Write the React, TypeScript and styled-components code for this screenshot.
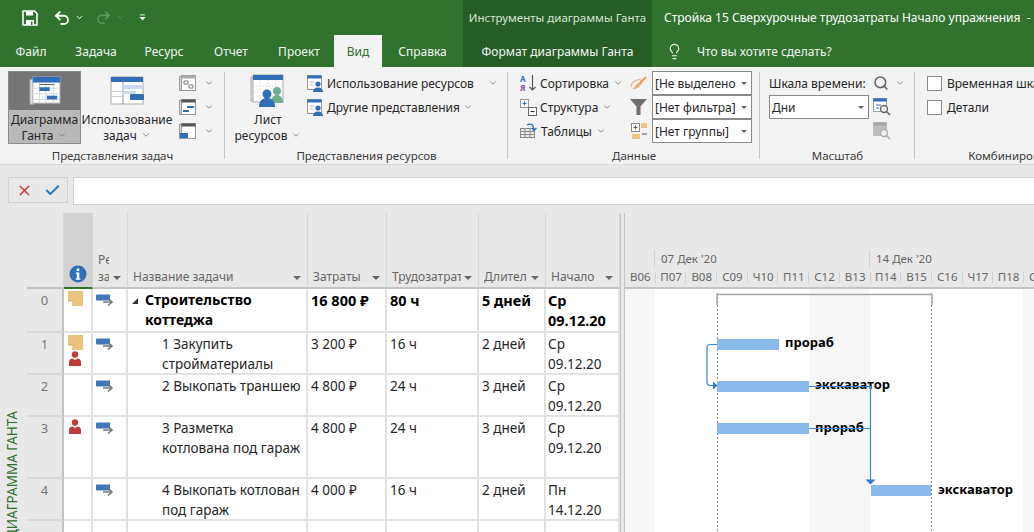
import styled, { createGlobalStyle } from 'styled-components'
import { Undo2, Redo2, Lightbulb, Search, X, Check, ChevronDown } from 'lucide-react'

const GlobalStyle = createGlobalStyle`
  html, body {
    margin: 0;
    padding: 0;
    background: #fff;
  }
  body {
    font-family: "Noto Sans", "Open Sans", "Liberation Sans", sans-serif;
    font-size: 12px;
    color: #262626;
  }
`

const Page = styled.div`
  width: 1034px;
  height: 532px;
  overflow: hidden;
  display: flex;
  flex-direction: column;
`

// title bar + tabs
const TitleBar = styled.div`
  height: 35px;
  flex: none;
  display: flex;
  align-items: center;
  background: #31722e;
  color: #fff;
  padding-left: 22px;
`
const QuickBtn = styled.span<{ $w: number; $dim?: boolean }>`
  width: ${(p) => p.$w}px;
  flex: none;
  display: flex;
  align-items: center;
  color: ${(p) => (p.$dim ? '#5d9a5a' : '#fff')};
`
const ToolsTitle = styled.div`
  width: 189px;
  height: 35px;
  margin-left: 317px;
  flex: none;
  background: #265c25;
  color: #d6e6d5;
  line-height: 35px;
  font-size: 11.5px;
  text-align: center;
  white-space: nowrap;
`
const DocTitle = styled.div`
  margin-left: 12px;
  white-space: pre;
  font-size: 12px;
`
const TabRow = styled.div`
  height: 32px;
  flex: none;
  display: flex;
  background: #31722e;
  color: #f2f6f2;
`
const Tab = styled.div<{ $w: number; $active?: boolean }>`
  width: ${(p) => p.$w}px;
  flex: none;
  text-align: center;
  line-height: 34px;
  font-size: 12px;
  white-space: nowrap;
  background: ${(p) => (p.$active ? '#f3f3f3' : 'transparent')};
  color: ${(p) => (p.$active ? '#2f702c' : 'inherit')};
`
const ToolsTab = styled(Tab)`
  background: #265c25;
`
const Tell = styled.div`
  display: flex;
  align-items: center;
  gap: 14px;
  padding-left: 14px;
  font-size: 12px;
  padding-top: 1px;
`

// ribbon
const Ribbon = styled.div`
  height: 98px;
  box-sizing: border-box;
  flex: none;
  display: flex;
  background: #f3f3f3;
  border-bottom: 1px solid #d8d8d8;
`
const Group = styled.div<{ $w: number }>`
  width: ${(p) => p.$w}px;
  flex: none;
  display: flex;
  flex-direction: column;
  position: relative;
  &::after {
    content: '';
    position: absolute;
    right: 0;
    top: 5px;
    bottom: 5px;
    width: 1px;
    background: #c6c6c6;
  }
`
const GroupBody = styled.div<{ $pl: number }>`
  height: 80px;
  flex: none;
  display: flex;
  padding: 4px 0 0 ${(p) => p.$pl}px;
  box-sizing: border-box;
`
const GroupLabel = styled.div`
  text-align: center;
  font-size: 11.5px;
  line-height: 18px;
  color: #3a3a3a;
  white-space: nowrap;
  overflow: hidden;
`
const BigBtn = styled.div<{ $w: number; $on?: boolean }>`
  width: ${(p) => p.$w}px;
  height: 73px;
  flex: none;
  box-sizing: border-box;
  display: flex;
  flex-direction: column;
  align-items: center;
  font-size: 12px;
  line-height: 16px;
  text-align: center;
  white-space: nowrap;
  border: ${(p) => (p.$on ? '1px solid #8c8c8c' : '1px solid transparent')};
  background: ${(p) => (p.$on ? '#b9b9b9' : 'transparent')};
`
const BigIcon = styled.div<{ $on?: boolean }>`
  align-self: stretch;
  height: 38px;
  flex: none;
  display: flex;
  align-items: center;
  justify-content: center;
  background: ${(p) => (p.$on ? '#757575' : 'transparent')};
`
const BigText = styled.div`
  padding-top: 2px;
`
const Stack = styled.div<{ $w?: number; $ml?: number }>`
  display: flex;
  flex-direction: column;
  flex: none;
  ${(p) => (p.$w ? `width: ${p.$w}px;` : '')}
  ${(p) => (p.$ml ? `margin-left: ${p.$ml}px;` : '')}
`
const SmallBtn = styled.div<{ $gap?: number }>`
  height: 24px;
  display: flex;
  align-items: center;
  gap: ${(p) => p.$gap ?? 3}px;
  white-space: nowrap;
  font-size: 12px;
`
const Caret = styled.span<{ $ml?: number }>`
  display: inline-flex;
  margin-left: ${(p) => p.$ml ?? 0}px;
  color: #777;
`
const Combo = styled.div<{ $w: number }>`
  width: ${(p) => p.$w}px;
  height: 24px;
  box-sizing: border-box;
  background: #fff;
  border: 1px solid #8a8a8a;
  display: flex;
  align-items: center;
  justify-content: space-between;
  padding: 0 4px 0 2px;
  font-size: 12px;
  white-space: nowrap;
  overflow: hidden;
`
const ComboArrow = styled.span`
  width: 0;
  height: 0;
  flex: none;
  border-left: 3px solid transparent;
  border-right: 3px solid transparent;
  border-top: 3px solid #666;
`
const CheckBox = styled.span`
  width: 13px;
  height: 13px;
  flex: none;
  background: #fff;
  border: 1px solid #8a8a8a;
`

// formula bar
const FormulaBar = styled.div`
  height: 48px;
  flex: none;
  display: flex;
  align-items: flex-start;
  gap: 5px;
  padding: 12px 0 0 8px;
  box-sizing: border-box;
  background: #e8e8e8;
`
const FormulaBtns = styled.div`
  width: 60px;
  height: 26px;
  box-sizing: border-box;
  display: flex;
  align-items: center;
  justify-content: center;
  gap: 11px;
  border: 1px solid #d0d0d0;
`
const FormulaInput = styled.div`
  flex: 1;
  height: 26px;
  background: #fff;
  border: 1px solid #d0d0d0;
  border-right: 0;
`

// main area
const Main = styled.div`
  flex: 1;
  display: flex;
  min-height: 0;
  background: #e8e8e8;
`
const SideLabel = styled.div`
  width: 27px;
  flex: none;
  display: flex;
  align-items: flex-end;
  justify-content: flex-start;
`
const SideText = styled.div`
  writing-mode: vertical-rl;
  transform: rotate(180deg);
  color: #2f702c;
  font-size: 13.5px;
  line-height: 25px;
  margin-bottom: -7px;
  white-space: nowrap;
`
const Table = styled.div`
  width: 593px;
  flex: none;
  display: flex;
  flex-direction: column;
`
const columns = '37px 29px 35px 180px 79px 92px 67px 74px'
const HeadRow = styled.div`
  height: 76px;
  flex: none;
  display: grid;
  grid-template-columns: ${columns};
`
const HeadCell = styled.div<{ $sel?: boolean }>`
  display: flex;
  align-items: flex-end;
  justify-content: space-between;
  padding: 0 6px 2px 5px;
  box-sizing: border-box;
  color: #666;
  font-size: 12px;
  line-height: 17px;
  white-space: nowrap;
  overflow: hidden;
  border-right: 1px solid #d6d6d6;
  background: ${(p) => (p.$sel ? '#d2d2d2' : 'transparent')};
  border-bottom: ${(p) => (p.$sel ? '2px solid #2f702c' : '2px solid #c4c4c4')};
`
const InfoHead = styled(HeadCell)`
  justify-content: center;
  padding: 0 0 4px;
`
const ModeLabel = styled.div`
  width: 11px;
  overflow: hidden;
`
const HeadText = styled.span`
  overflow: hidden;
`
const HeadArrow = styled.span`
  flex: none;
  width: 0;
  height: 0;
  margin: 0 0 5px 3px;
  border-left: 4px solid transparent;
  border-right: 4px solid transparent;
  border-top: 4px solid #666;
`
const Row = styled.div<{ $h: number; $bold?: boolean }>`
  height: ${(p) => p.$h}px;
  flex: none;
  display: grid;
  grid-template-columns: ${columns};
  font-size: ${(p) => (p.$bold ? '14.5px' : '13.5px')};
  font-weight: ${(p) => (p.$bold ? 700 : 400)};
  line-height: 20px;
  color: ${(p) => (p.$bold ? '#000' : '#262626')};
`
const Cell = styled.div`
  background: #fff;
  border-right: 2px solid #e2e2e2;
  border-bottom: 2px solid #e2e2e2;
  box-sizing: border-box;
  padding: 1px 0 0 3px;
  overflow: hidden;
  white-space: nowrap;
`
const StartCell = styled(Cell)`
  padding-left: 2px;
`
const NumCell = styled.div`
  border-right: 2px solid #c4c4c4;
  border-bottom: 2px solid #d8d8d8;
  box-sizing: border-box;
  color: #777;
  font-weight: 400;
  font-size: 13px;
  text-align: center;
  padding-top: 1px;
  overflow: hidden;
`
const IconCell = styled(Cell)<{ $pr: number }>`
  display: flex;
  flex-direction: column;
  align-items: center;
  padding: 2px ${(p) => p.$pr}px 0 0;
  gap: 1px;
`
const NameCell = styled(Cell)<{ $indent: number; $bold?: boolean }>`
  padding-left: ${(p) => p.$indent}px;
  position: relative;
  ${(p) => (p.$bold ? 'font-size: 14px;' : '')}
`
const Collapse = styled.span`
  position: absolute;
  left: 4px;
  top: 9px;
  width: 0;
  height: 0;
  border-left: 6px solid transparent;
  border-bottom: 6px solid #333;
`
const Splitter = styled.div`
  width: 5px;
  flex: none;
  border-left: 1px solid #c4c4c4;
  border-right: 1px solid #c4c4c4;
  box-sizing: border-box;
`

// gantt
const Gantt = styled.div`
  flex: 1;
  min-width: 0;
  display: flex;
  flex-direction: column;
  overflow: hidden;
`
const Scale = styled.div`
  height: 76px;
  flex: none;
  border-bottom: 2px solid #c4c4c4;
  box-sizing: border-box;
  display: flex;
  flex-direction: column;
  justify-content: flex-end;
  color: #666;
  font-size: 11.5px;
`
const WeekRow = styled.div`
  display: flex;
  height: 18px;
  padding-left: 29px;
`
const Week = styled.div`
  width: 215px;
  flex: none;
  border-left: 1px solid #d0d0d0;
  padding-left: 6px;
  box-sizing: border-box;
  line-height: 18px;
  white-space: nowrap;
`
const DayRow = styled.div`
  display: flex;
  height: 19px;
`
const Day = styled.div`
  width: 30.7px;
  flex: none;
  text-align: center;
  line-height: 17px;
  white-space: nowrap;
  box-sizing: border-box;
  position: relative;
  &::after {
    content: '';
    position: absolute;
    right: 0;
    top: 4px;
    height: 11px;
    width: 1px;
    background: #d0d0d0;
  }
`
const Chart = styled.svg`
  display: block;
  flex: none;
`
const BarLabel = styled.text`
  font-family: "Noto Sans", "Open Sans", sans-serif;
  font-size: 13px;
  font-weight: 700;
  fill: #000;
`

const GanttBig = () => (
  <svg width="34" height="30" viewBox="0 0 34 32">
    <rect x="1" y="4" width="4" height="26" fill="#e8e8e8" stroke="#a8a8a8" />
    <rect x="4" y="1" width="29" height="28" fill="#fff" stroke="#a8a8a8" />
    <rect x="4" y="1" width="29" height="6" fill="#2f6fb7" />
    <path d="M5 13h28M5 19h28M5 25h28M11 7v22M18 7v22M26 7v22" stroke="#cfd8e4" />
    <rect x="11" y="12" width="11" height="4" fill="#2f6fb7" />
    <rect x="19" y="21" width="11" height="4" fill="#2f6fb7" />
    <path d="M11 9h16" stroke="#555" />
  </svg>
)
const UsageBig = () => (
  <svg width="34" height="30" viewBox="0 0 34 30">
    <rect x="1" y="1" width="32" height="27" fill="#fff" stroke="#aaa" />
    <rect x="1" y="1" width="32" height="5" fill="#2f6fb7" />
    <path d="M13 6v22" stroke="#999" />
    <rect x="13" y="9" width="20" height="4" fill="#c9d9ee" />
    <rect x="2" y="15" width="10" height="1" fill="#ccc" />
    <rect x="2" y="20" width="10" height="1" fill="#ccc" />
    <rect x="13" y="15" width="13" height="3" fill="#c9d9ee" />
    <rect x="20" y="18" width="14" height="6" rx="1" fill="#2f6fb7" />
  </svg>
)
const PeopleBig = () => (
  <svg width="36" height="34" viewBox="0 0 36 34">
    <rect x="1" y="3" width="3" height="24" fill="#e4e4e4" stroke="#aaa" />
    <rect x="3" y="1" width="30" height="27" fill="#fff" stroke="#aaa" />
    <rect x="3" y="1" width="30" height="5" fill="#2f6fb7" />
    <path d="M10 6v22M18 6v22M26 6v22M4 12h28M4 18h28" stroke="#d4d4d4" strokeDasharray="1 2" />
    <circle cx="27" cy="17" r="4" fill="#6fb08f" />
    <path d="M21 29c0-6 3-8 6-8s6 2 6 8z" fill="#6fb08f" />
    <circle cx="17" cy="20" r="4.5" fill="#2f6fb7" />
    <path d="M9 33c0-7 4-9 8-9s8 2 8 9z" fill="#2f6fb7" />
  </svg>
)
const Mini = ({ kind }: { kind: number }) => (
  <svg width="17" height="17" viewBox="0 0 17 17">
    <rect x="0.5" y="1.5" width="2" height="14" fill="#ddd" stroke="#999" />
    <rect x="2.5" y="0.5" width="14" height="15" fill="#fff" stroke="#999" />
    <rect x="2.5" y="0.5" width="14" height="3" fill={kind === 0 ? '#aaa' : '#555'} />
    {kind === 0 && <path d="M5 6h4v3H5zM10 10h4v3h-4z" fill="#fff" stroke="#777" />}
    {kind === 1 && <path d="M8 8h7M4 12h6" stroke="#2f6fb7" strokeWidth="2" />}
    {kind === 2 && <path d="M1 10h8v5H1z" fill="#2f6fb7" />}
  </svg>
)
const PersonSheet = () => (
  <svg width="17" height="17" viewBox="0 0 17 17">
    <rect x="0.5" y="0.5" width="14" height="14" fill="#fff" stroke="#999" />
    <rect x="0.5" y="0.5" width="14" height="3" fill="#2f6fb7" />
    <path d="M3 7h4M3 10h3" stroke="#bbb" />
    <circle cx="11" cy="9" r="2.6" fill="#2f6fb7" />
    <path d="M6 17c0-3 2-4.5 5-4.5s5 1.5 5 4.5z" fill="#2f6fb7" />
  </svg>
)
const SortIcon = () => (
  <svg width="17" height="18" viewBox="0 0 17 18">
    <text x="0" y="7.5" fontSize="8" fontWeight="700" fill="#2f6fb7" fontFamily="Noto Sans">A</text>
    <text x="0" y="16.5" fontSize="8" fontWeight="700" fill="#8e4a9e" fontFamily="Noto Sans">Я</text>
    <path d="M12.5 1v15M9.5 13l3 3 3-3" fill="none" stroke="#555" strokeWidth="1.2" />
  </svg>
)
const OutlineIcon = () => (
  <svg width="17" height="17" viewBox="0 0 17 17">
    <rect x="0.5" y="0.5" width="8" height="8" fill="#fff" stroke="#999" />
    <path d="M2.5 4.5h4M4.5 2.5v4" stroke="#2f6fb7" />
    <rect x="8.5" y="8.5" width="8" height="8" fill="#fff" stroke="#666" />
    <path d="M10.5 12.5h4" stroke="#333" />
  </svg>
)
const TablesIcon = () => (
  <svg width="18" height="18" viewBox="0 0 18 18">
    <rect x="0.5" y="6.5" width="14" height="9" fill="#eee" stroke="#888" />
    <path d="M1 9.5h13M1 12.5h13M5 7v8M10 7v8" stroke="#888" />
    <path d="M7 3c4-2 7 0 7 5M12 6l2 2.5L16.5 6" fill="none" stroke="#2f6fb7" strokeWidth="1.3" />
  </svg>
)
const HighlightIcon = () => (
  <svg width="18" height="18" viewBox="0 0 18 18">
    <path d="M1 13c0-6 9-9 11-6 1 3-8 9-9 7" fill="none" stroke="#eab38a" strokeWidth="1.3" />
    <path d="M5 14L16 3" stroke="#e8a15f" strokeWidth="2.2" />
  </svg>
)
const FunnelIcon = () => (
  <svg width="18" height="16" viewBox="0 0 18 16">
    <path d="M0 0h17l-6.5 7.5V16h-4V7.5z" fill="#6e6e6e" />
  </svg>
)
const GroupIcon = () => (
  <svg width="18" height="17" viewBox="0 0 18 17">
    <rect x="1.5" y="0.5" width="8" height="8" fill="#fff" stroke="#888" />
    <path d="M3.5 4.5h4M5.5 2.5v4" stroke="#555" />
    <rect x="11" y="0" width="6" height="5" fill="#eac67a" />
    <rect x="2" y="11" width="8" height="5" fill="#eac67a" />
    <path d="M12 11h5" stroke="#555" />
  </svg>
)
const ScaleZoom = ({ dim }: { dim?: boolean }) => (
  <svg width="18" height="18" viewBox="0 0 18 18">
    <rect x="0.5" y="0.5" width="13" height="13" fill={dim ? '#bdbdbd' : '#fff'} stroke={dim ? '#bdbdbd' : '#8aa'} />
    <rect x="0.5" y="0.5" width="13" height="3" fill={dim ? '#aaa' : '#2f6fb7'} />
    {!dim && <path d="M3 7h5M3 10h3" stroke="#2f6fb7" />}
    <circle cx="11" cy="11" r="3.5" fill="#f3f3f3" stroke={dim ? '#aaa' : '#666'} strokeWidth="1.4" />
    <path d="M13.5 13.5l3.5 3.5" stroke={dim ? '#aaa' : '#666'} strokeWidth="1.6" />
  </svg>
)
const SaveIcon = () => (
  <svg width="16" height="16" viewBox="0 0 16 16">
    <path d="M1 1h11.5L15 3.5V15H1z" fill="none" stroke="#fff" strokeWidth="1.6" />
    <path d="M4 1.5h7v4H4z" fill="#fff" />
    <path d="M4 10h8v5H4z" fill="#fff" />
    <path d="M9 11.5h1.5V15H9z" fill="#31722e" />
  </svg>
)
const CustomizeIcon = () => (
  <svg width="8" height="9" viewBox="0 0 8 9">
    <path d="M1 1.5h6" stroke="#fff" />
    <path d="M0.5 4h7L4 8z" fill="#fff" />
  </svg>
)
const InfoIcon = () => (
  <svg width="18" height="18" viewBox="0 0 18 18">
    <circle cx="9" cy="9" r="8.5" fill="#2f6fb7" />
    <rect x="7.7" y="3.5" width="2.6" height="2.6" fill="#fff" />
    <path d="M6.8 7.5h3.5v6h1.2v1.2H6.8v-1.2h1v-4.800h-1z" fill="#fff" />
  </svg>
)
const NoteIcon = () => (
  <svg width="15" height="15" viewBox="0 0 15 15">
    <path d="M0 0h15v15H5L0 10z" fill="#e8c47e" />
    <path d="M0 10h5v5z" fill="#fff" />
    <path d="M0 10h5v5" fill="none" stroke="#d8ac5c" />
  </svg>
)
const PersonIcon = () => (
  <svg width="12" height="15" viewBox="0 0 12 15">
    <circle cx="6" cy="3.5" r="3.2" fill="#c13b3b" />
    <path d="M0 15v-4c0-2.500 2-3.500 3.500-3.500L6 9l2.500-1.500C10 7.500 12 8.500 12 11v4z" fill="#c13b3b" />
  </svg>
)
const ModeIcon = () => (
  <svg width="18" height="12" viewBox="0 0 18 12" style={{ marginTop: 3 }}>
    <path d="M0 1.5a1 1 0 011-1h13v6H1a1 1 0 01-1-1z" fill="#3f77b8" />
    <path d="M7 8h8M12 4.5L16 8l-4 3.5" fill="none" stroke="#777" strokeWidth="1.6" />
  </svg>
)
const Down = ({ ml }: { ml?: number }) => (
  <Caret $ml={ml}>
    <ChevronDown size={10} strokeWidth={2} />
  </Caret>
)

const days = ['В06', 'П07', 'В08', 'С09', 'Ч10', 'П11', 'С12', 'В13', 'П14', 'В15', 'С16', 'Ч17', 'П18', 'С19']

const heads = ['Название задачи', 'Затраты', 'Трудозатрат', 'Длител', 'Начало']

type Task = {
  h: number
  n: string
  bold?: boolean
  note?: boolean
  person?: boolean
  empty?: boolean
  name: string[]
  indent: number
  cost: string
  work: string
  dur: string
  start: string[]
}

const tasks: Task[] = [
  { h: 44, n: '0', bold: true, note: true, name: ['Строительство', 'коттеджа'], indent: 17, cost: '16 800 ₽', work: '80 ч', dur: '5 дней', start: ['Ср', '09.12.20'] },
  { h: 42, n: '1', note: true, person: true, name: ['1 Закупить', 'стройматериалы'], indent: 34, cost: '3 200 ₽', work: '16 ч', dur: '2 дней', start: ['Ср', '09.12.20'] },
  { h: 42, n: '2', name: ['2 Выкопать траншею'], indent: 34, cost: '4 800 ₽', work: '24 ч', dur: '3 дней', start: ['Ср', '09.12.20'] },
  { h: 62, n: '3', person: true, name: ['3 Разметка', 'котлована под гараж'], indent: 34, cost: '4 800 ₽', work: '24 ч', dur: '3 дней', start: ['Ср', '09.12.20'] },
  { h: 42, n: '4', name: ['4 Выкопать котлован', 'под гараж'], indent: 34, cost: '4 000 ₽', work: '16 ч', dur: '2 дней', start: ['Пн', '14.12.20'] },
  { h: 30, n: '', empty: true, name: [], indent: 34, cost: '', work: '', dur: '', start: [] },
]

const App = () => {
  return (
    <Page>
      <GlobalStyle />
      <TitleBar>
        <QuickBtn $w={31}><SaveIcon /></QuickBtn>
        <QuickBtn $w={22}><Undo2 size={18} strokeWidth={2.4} /></QuickBtn>
        <QuickBtn $w={20}><ChevronDown size={9} strokeWidth={2.5} /></QuickBtn>
        <QuickBtn $w={21} $dim><Redo2 size={17} strokeWidth={2.2} /></QuickBtn>
        <QuickBtn $w={23} $dim><ChevronDown size={9} strokeWidth={2.5} /></QuickBtn>
        <QuickBtn $w={7}><CustomizeIcon /></QuickBtn>
        <ToolsTitle>Инструменты диаграммы Ганта</ToolsTitle>
        <DocTitle>Стройка 15 Сверхурочные трудозатраты Начало упражнения  -</DocTitle>
      </TitleBar>
      <TabRow>
        <Tab $w={62}>Файл</Tab>
        <Tab $w={68}>Задача</Tab>
        <Tab $w={68}>Ресурс</Tab>
        <Tab $w={66}>Отчет</Tab>
        <Tab $w={70}>Проект</Tab>
        <Tab $w={48} $active>Вид</Tab>
        <Tab $w={81}>Справка</Tab>
        <ToolsTab $w={189}>Формат диаграммы Ганта</ToolsTab>
        <Tell>
          <Lightbulb size={17} strokeWidth={1.6} />
          Что вы хотите сделать?
        </Tell>
      </TabRow>

      <Ribbon>
        <Group $w={225}>
          <GroupBody $pl={8}>
            <BigBtn $w={73} $on>
              <BigIcon $on><GanttBig /></BigIcon>
              <BigText>Диаграмма<br />Ганта<Down ml={4} /></BigText>
            </BigBtn>
            <BigBtn $w={92}>
              <BigIcon><UsageBig /></BigIcon>
              <BigText>Использование<br />задач<Down ml={4} /></BigText>
            </BigBtn>
            <Stack $ml={6}>
              <SmallBtn $gap={8}><Mini kind={0} /><Down /></SmallBtn>
              <SmallBtn $gap={8}><Mini kind={1} /><Down /></SmallBtn>
              <SmallBtn $gap={8}><Mini kind={2} /><Down /></SmallBtn>
            </Stack>
          </GroupBody>
          <GroupLabel>Представления задач</GroupLabel>
        </Group>

        <Group $w={283}>
          <GroupBody $pl={11}>
            <BigBtn $w={64}>
              <BigIcon><PeopleBig /></BigIcon>
              <BigText>Лист<br />ресурсов<Down ml={4} /></BigText>
            </BigBtn>
            <Stack $ml={7}>
              <SmallBtn><PersonSheet />Использование ресурсов<Down ml={11} /></SmallBtn>
              <SmallBtn><PersonSheet />Другие представления<Down /></SmallBtn>
            </Stack>
          </GroupBody>
          <GroupLabel>Представления ресурсов</GroupLabel>
        </Group>

        <Group $w={252}>
          <GroupBody $pl={12}>
            <Stack $w={110}>
              <SmallBtn><SortIcon />Сортировка<Down ml={1} /></SmallBtn>
              <SmallBtn><OutlineIcon />Структура<Down ml={1} /></SmallBtn>
              <SmallBtn><TablesIcon />Таблицы<Down ml={1} /></SmallBtn>
            </Stack>
            <Stack $w={22}>
              <SmallBtn><HighlightIcon /></SmallBtn>
              <SmallBtn><FunnelIcon /></SmallBtn>
              <SmallBtn><GroupIcon /></SmallBtn>
            </Stack>
            <Stack>
              <Combo $w={100}>[Не выделено<ComboArrow /></Combo>
              <Combo $w={100}>[Нет фильтра]<ComboArrow /></Combo>
              <Combo $w={100}>[Нет группы]<ComboArrow /></Combo>
            </Stack>
          </GroupBody>
          <GroupLabel>Данные</GroupLabel>
        </Group>

        <Group $w={155}>
          <GroupBody $pl={9}>
            <Stack $w={104}>
              <SmallBtn>Шкала времени:</SmallBtn>
              <Combo $w={100}>Дни<ComboArrow /></Combo>
            </Stack>
            <Stack>
              <SmallBtn $gap={4}><Search size={16} color="#666" strokeWidth={2.4} /><Down ml={2} /></SmallBtn>
              <SmallBtn><ScaleZoom /></SmallBtn>
              <SmallBtn><ScaleZoom dim /></SmallBtn>
            </Stack>
          </GroupBody>
          <GroupLabel>Масштаб</GroupLabel>
        </Group>

        <Group $w={214}>
          <GroupBody $pl={12}>
            <Stack>
              <SmallBtn $gap={5}><CheckBox />Временная шкала</SmallBtn>
              <SmallBtn $gap={5}><CheckBox />Детали</SmallBtn>
            </Stack>
          </GroupBody>
          <GroupLabel>Комбинированный</GroupLabel>
        </Group>
      </Ribbon>

      <FormulaBar>
        <FormulaBtns>
          <X size={17} color="#d0393b" strokeWidth={2} />
          <Check size={17} color="#2b79b5" strokeWidth={2.8} />
        </FormulaBtns>
        <FormulaInput />
      </FormulaBar>

      <Main>
        <SideLabel><SideText>ДИАГРАММА ГАНТА</SideText></SideLabel>
        <Table>
          <HeadRow>
            <HeadCell />
            <InfoHead $sel><InfoIcon /></InfoHead>
            <HeadCell>
              <ModeLabel>Ре<br />за</ModeLabel>
              <HeadArrow />
            </HeadCell>
            {heads.map((h) => (
              <HeadCell key={h}>
                <HeadText>{h}</HeadText>
                <HeadArrow />
              </HeadCell>
            ))}
          </HeadRow>
          {tasks.map((t, i) => (
            <Row key={i} $h={t.h} $bold={t.bold}>
              <NumCell>{t.n}</NumCell>
              <IconCell $pr={5}>
                {t.note && <NoteIcon />}
                {t.person && <PersonIcon />}
              </IconCell>
              <IconCell $pr={10}>{!t.empty && <ModeIcon />}</IconCell>
              <NameCell $indent={t.indent} $bold={t.bold}>
                {t.bold && <Collapse />}
                {t.name.map((line) => <div key={line}>{line}</div>)}
              </NameCell>
              <Cell>{t.cost}</Cell>
              <Cell>{t.work}</Cell>
              <Cell>{t.dur}</Cell>
              <StartCell>{t.start.map((line) => <div key={line}>{line}</div>)}</StartCell>
            </Row>
          ))}
        </Table>
        <Splitter />
        <Gantt>
          <Scale>
            <WeekRow>
              <Week>07 Дек '20</Week>
              <Week>14 Дек '20</Week>
            </WeekRow>
            <DayRow>
              {days.map((d) => <Day key={d}>{d}</Day>)}
            </DayRow>
          </Scale>
          <Chart width="409" height="243" viewBox="625 289 409 243">
            <rect x="625" y="289" width="409" height="243" fill="#fff" />
            <rect x="625" y="289" width="30" height="243" fill="#f6f6f6" />
            <rect x="809" y="289" width="61" height="243" fill="#f6f6f6" />
            <rect x="1023" y="289" width="11" height="243" fill="#f6f6f6" />
            <path d="M717.5 293V532M931.5 293V532" stroke="#8a8a8a" strokeDasharray="2 2" />
            <path d="M717 305v-10.500h215V305" fill="none" stroke="#a9a9a9" strokeWidth="1.5" />
            <rect x="717" y="339" width="62" height="11" fill="#8ab9ec" />
            <rect x="717" y="381" width="92" height="11" fill="#8ab9ec" />
            <rect x="717" y="423" width="92" height="11" fill="#8ab9ec" />
            <rect x="871" y="485" width="60" height="11" fill="#8ab9ec" />
            <path d="M717 344.5h-7q-3 0-3 3v35q0 3 3 3h3" fill="none" stroke="#3f87d8" strokeWidth="1.2" />
            <path d="M713 381.5l4.500 4-4.500 4z" fill="#2f78cc" />
            <BarLabel x="785" y="347">прораб</BarLabel>
            <BarLabel x="815" y="389">экскаватор</BarLabel>
            <BarLabel x="815" y="432">прораб</BarLabel>
            <BarLabel x="938" y="494">экскаватор</BarLabel>
            <path d="M809 386.5h61M809 428.5h61M870.5 386v94" fill="none" stroke="#3f87d8" strokeWidth="1.2" />
            <path d="M865.5 479.5h10l-5 5z" fill="#2f78cc" />
          </Chart>
        </Gantt>
      </Main>
    </Page>
  )
}

export default App
